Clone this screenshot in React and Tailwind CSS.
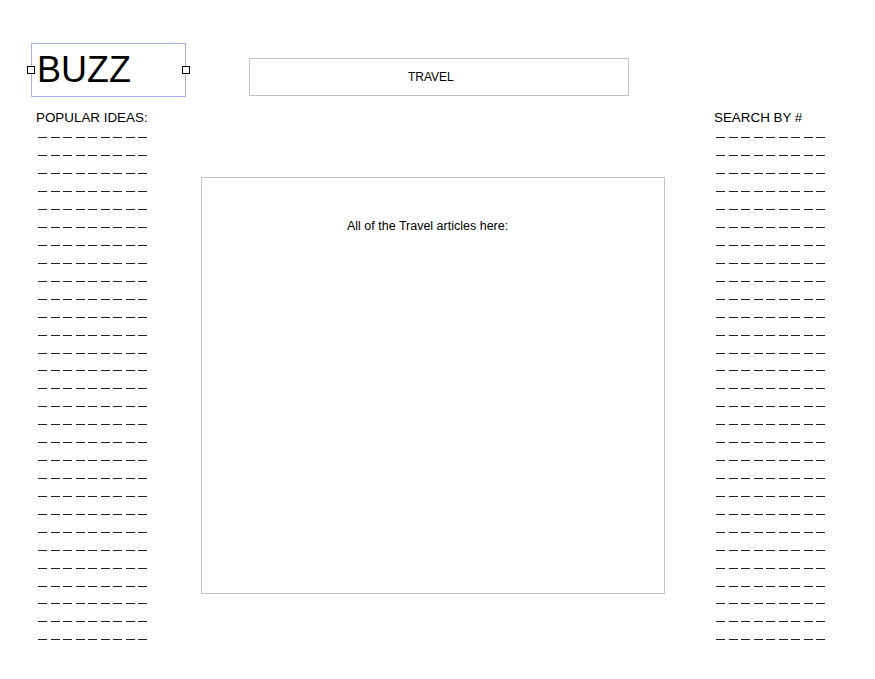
import React from 'react';

const rows = Array.from({ length: 29 });
const dashes = Array.from({ length: 9 });

const DashRow = () => (
  <div className="h-[17.93px] flex items-center pl-[2px]">
    <div className="flex gap-[3.5px]">
      {dashes.map((_, i) => <span key={i} className="block w-[9px] h-px bg-[#222]" />)}
    </div>
  </div>
);

const Column = ({ title }) => (
  <div className="w-[150px]">
    <div className="h-[21px] leading-[20px] text-[13.4px] text-black">{title}</div>
    {rows.map((_, i) => <DashRow key={i} />)}
  </div>
);

export default function App() {
  return (
    <div className="w-[875px] h-[679px] bg-white overflow-hidden" style={{ fontFamily: '"Liberation Sans", Arial, sans-serif' }}>
      <div className="flex items-start pt-[43px]">
        <div className="relative ml-[31px] w-[155px] h-[54px] border border-[#a3aef0]">
          <span className="absolute left-[5px] top-[4px] text-[36px] leading-[44px] text-black">BUZZ</span>
          <span className="absolute -left-[5px] top-[22px] w-[8px] h-[8px] border border-black bg-white" />
          <span className="absolute -right-[5px] top-[22px] w-[8px] h-[8px] border border-black bg-white" />
        </div>
        <div className="ml-[63px] mt-[15px] w-[380px] h-[38px] border border-[#c4c4c4] flex items-center pl-[158px] text-[12px] text-black">
          TRAVEL
        </div>
      </div>
      <div className="flex items-start mt-[11px]">
        <div className="ml-[36px]">
          <Column title="POPULAR IDEAS:" />
        </div>
        <div className="ml-[15px] mt-[69px] w-[464px] h-[417px] border border-[#c4c4c4] pt-[40px] pl-[145px] text-[12.5px] leading-[16px] text-black">
          All of the Travel articles here:
        </div>
        <div className="ml-[49px]">
          <Column title="SEARCH BY #" />
        </div>
      </div>
    </div>
  );
}
